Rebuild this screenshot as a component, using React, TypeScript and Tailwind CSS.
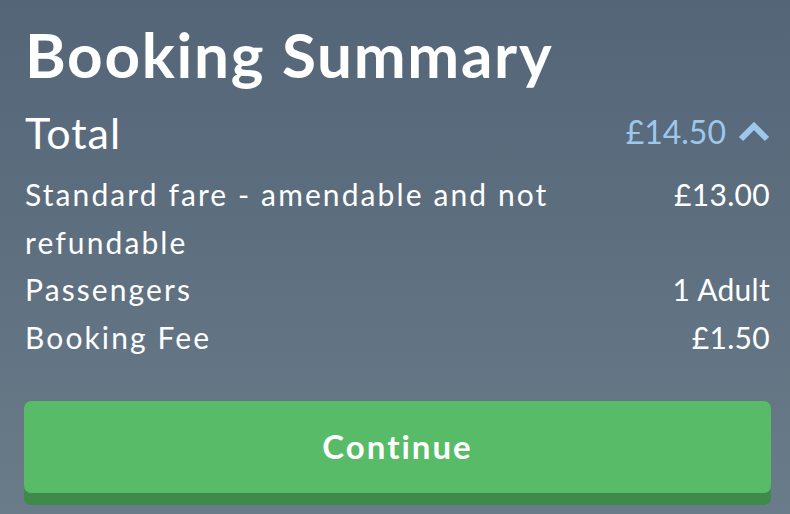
export default function App() {
  const rows = [
    { label: 'Standard fare - amendable and not refundable', value: '£13.00' },
    { label: 'Passengers', value: '1 Adult' },
    { label: 'Booking Fee', value: '£1.50' },
  ];

  return (
    <div
      className="w-[790px] h-[514px] bg-gradient-to-b from-[#536577] to-[#6a7b89] text-white pl-[25px] pr-[20px] pt-[18px]"
      style={{ fontFamily: 'Lato, "Open Sans", sans-serif' }}
    >
      <h1 className="text-[62px] font-bold leading-[72px] tracking-[1.7px]">Booking Summary</h1>

      <div className="flex items-center justify-between mt-[17px] h-[50px]">
        <span className="text-[43px] leading-none tracking-[1px]">Total</span>
        <span className="flex items-center gap-[12px] text-[#9dc8ec] text-[32px]">
          £14.50
          <svg width="32" height="22" viewBox="0 0 32 22" fill="none">
            <path d="M3 18 L16 5 L29 18" stroke="#9dc8ec" strokeWidth="6" strokeLinejoin="miter" />
          </svg>
        </span>
      </div>

      <div className="mt-[14px] text-[30px] leading-[47.5px]">
        {rows.map((row) => (
          <div key={row.label} className="flex justify-between gap-[40px]">
            <span className="max-w-[560px] tracking-[2.1px]">{row.label}</span>
            <span className="shrink-0 tracking-[0.3px]">{row.value}</span>
          </div>
        ))}
      </div>

      <button className="mt-[40px] -ml-[1px] w-[747px] h-[104px] rounded-[7px] bg-[#3f8a4b] pb-[12px] block">
        <div className="h-full rounded-[7px] bg-[#57bb67] flex items-center justify-center text-[33px] font-bold tracking-[2px]">
          Continue
        </div>
      </button>
    </div>
  );
}
